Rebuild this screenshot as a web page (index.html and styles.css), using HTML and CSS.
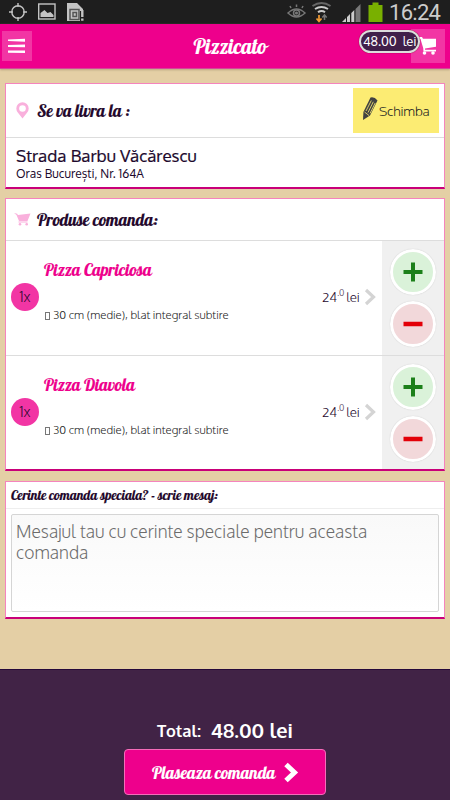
FILE: index.html
```html
<!DOCTYPE html>
<html lang="ro">
<head>
<meta charset="utf-8">
<title>Pizzicato</title>
<link rel="stylesheet" href="styles.css">
</head>
<body>
<div class="status">
  <svg class="s-left" width="90" height="24" viewBox="0 0 90 24" fill="none" stroke="#c4c4c4" stroke-width="1.4">
    <circle cx="18" cy="12" r="6.2"/><path d="M18 3v4M18 17v4M9 12h4M23 12h4"/>
    <rect x="38.7" y="4" width="16.3" height="15"/><path d="M40.5 17v-4l4-3 3 3 3-1 3 3v2z" fill="#c4c4c4" stroke="none"/>
    <path d="M67 3h10l6 6v2h-3v10H67z" fill="#c4c4c4" stroke="none"/><path d="M70 9.5h9v10h-9zM73 12.5h3.5v4H73z" stroke="#555" stroke-width="1.5"/><path d="M82.3 10v7M82.3 18.5v2.3" stroke-width="2.4"/>
  </svg>
  <svg class="s-right" width="98" height="24" viewBox="286 0 98 24">
    <g fill="none" stroke="#777" stroke-width="1.5"><path d="M288 13q8.500-8 17 0-8.500 8-17 0zM291 8l-1-2M296.500 7V4.500M302 8l1-2"/><circle cx="296.500" cy="13" r="3"/></g><circle cx="296.500" cy="13" r="1.600" fill="#777"/>
    <g fill="none" stroke-width="2"><path d="M312.500 6q9-6 18 0" stroke="#666"/><path d="M315 9q6.500-4 13 0M318 12.200q3.700-2.500 7 0" stroke="#ccc"/></g>
    <path d="M319 15v6M316.500 18.500l2.500 3 2.500-3" stroke="#f19a35" stroke-width="1.700" fill="none"/><path d="M324.500 20v-5M322.300 17.500l2.200-2.500 2.200 2.500" stroke="#777" stroke-width="1.500" fill="none"/>
    <path d="M342 22l4-4v4zM347 22v-5l3-3v8zM351.300 22v-9l3-3v12z" fill="#ccc"/><path d="M355.500 22V9l5-5v18z" fill="#777"/>
    <path d="M369 5h4V2.500h6V5h4v17h-14z" transform="translate(-.5)" fill="#79b000"/>
  </svg>
  <span class="clock">16:24</span>
</div>
<header class="bar">
  <div class="menu"><svg width="18" height="16" viewBox="0 0 18 16"><path d="M0 1.500l17-.8v3L0 3zM0 7l17-.4v2.700L0 9zM0 12.400l17 .2v2.500L0 14.800z" fill="#fff"/></svg></div>
  <h1 class="script title">Pizzicato</h1>
  <div class="cart"><svg width="18" height="18" viewBox="0 0 18 18"><path d="M0 0h3l1 1.800h13v8L6 11.500v1.300h11v1.600H4.500L4.200 11 1.500 2H0z" fill="#fff"/><circle cx="5.500" cy="16" r="1.800" fill="#fff"/><circle cx="14" cy="16" r="1.800" fill="#fff"/></svg><span class="amount">48.00&nbsp; lei</span></div>
</header>
<main>
  <section class="card">
    <div class="head address-head">
      <svg class="pin" width="14" height="17" viewBox="0 0 14 17"><path d="M6.500 16.500L2 10.800A6.200 6.200 0 1 1 11 10.800z" fill="#f9b0dc"/><circle cx="6.500" cy="6.500" r="3.300" fill="#fff"/></svg>
      <h2 class="script">Se va livra la :</h2>
      <div class="change"><svg width="18" height="26" viewBox="0 0 18 26"><path d="M9.500 1.500q4-1 7 3L9 19.500l-7 4.500.4-8z" fill="#424242"/><path d="M10.300 4.500L5 15M12.300 5.800L7 16.500M14.200 7L9 17.500M3.500 16l4.500 3.500" stroke="#fcec73" stroke-width=".8"/></svg><span>Schimba</span></div>
    </div>
    <div class="address"><div class="street">Strada Barbu Văcărescu</div><div class="city">Oras București, Nr. 164A</div></div>
  </section>
  <section class="card order">
    <div class="head products-head">
      <svg class="basket" width="17" height="13" viewBox="0 0 17 13"><path d="M0 0l3.200.8.7 1.200L16.500.5 13.500 8H5L2.500 2zM4.500 8.500h9v1h-9z" fill="#f9b0dc"/><circle cx="6" cy="11.300" r="1.300" fill="#f9b0dc"/><circle cx="12.700" cy="11.300" r="1.300" fill="#f9b0dc"/></svg>
      <h2 class="script">Produse comanda:</h2>
    </div>
    <article class="item">
      <div class="qty">1x</div>
      <div class="info"><h3 class="script">Pizza Capriciosa</h3><p><i class="tofu"></i><span>30 cm (medie), blat integral subtire</span></p></div>
      <div class="price">24<sup>.0</sup><span>lei</span></div>
      <svg class="chev" width="12" height="18" viewBox="0 0 12 18"><path d="M2 2l7.500 7L2 16" fill="none" stroke="#d4d4d4" stroke-width="3.200"/></svg>
      <div class="steps"><div class="round plus"><svg width="20" height="20"><path d="M10 .5v19M.5 10h19" stroke="#1c801a" stroke-width="4"/></svg></div><div class="round minus"><svg width="20" height="20"><path d="M.5 10h19" stroke="#e30008" stroke-width="4.500"/></svg></div></div>
    </article>
    <article class="item">
      <div class="qty">1x</div>
      <div class="info"><h3 class="script">Pizza Diavola</h3><p><i class="tofu"></i><span>30 cm (medie), blat integral subtire</span></p></div>
      <div class="price">24<sup>.0</sup><span>lei</span></div>
      <svg class="chev" width="12" height="18" viewBox="0 0 12 18"><path d="M2 2l7.500 7L2 16" fill="none" stroke="#d4d4d4" stroke-width="3.200"/></svg>
      <div class="steps"><div class="round plus"><svg width="20" height="20"><path d="M10 .5v19M.5 10h19" stroke="#1c801a" stroke-width="4"/></svg></div><div class="round minus"><svg width="20" height="20"><path d="M.5 10h19" stroke="#e30008" stroke-width="4.500"/></svg></div></div>
    </article>
  </section>
  <section class="card message">
    <div class="head message-head"><h2 class="script">Cerinte comanda speciala? - scrie mesaj:</h2></div>
    <div class="field">Mesajul tau cu cerinte speciale pentru aceasta<br>comanda</div>
  </section>
</main>
<footer>
  <div class="total"><span class="label">Total:</span><span class="sum">48.00 lei</span></div>
  <div class="submit"><span class="script">Plaseaza comanda</span><svg width="17" height="21" viewBox="0 0 17 21"><path d="M3 2.500l8.500 8L3 18.500" fill="none" stroke="#fff" stroke-width="5"/></svg></div>
</footer>
</body>
</html>
```
FILE: styles.css
```css
* { box-sizing: border-box; }
body { margin: 0; width: 450px; height: 800px; overflow: hidden; display: flex; flex-direction: column; background: #e4cfa5; color: #24082c; font-family: Oxygen, "Open Sans", "Noto Sans", sans-serif; }
h1, h2, h3, p { margin: 0; }
svg { display: block; flex: none; }
.script { font-family: Lobster, "Liberation Serif", serif; font-weight: normal; white-space: nowrap; font-variant-ligatures: none; letter-spacing: -.25px; -webkit-text-stroke: .1px; }
.status { height: 24px; flex: none; background: #1e1e1e; display: flex; }
.s-right { margin-left: 196px; }
.clock { margin-left: 5px; color: #ccc; font: 22px/26px Roboto, sans-serif; letter-spacing: -.7px; }
.bar { height: 45px; flex: none; background: #ee008c; display: flex; align-items: flex-start; justify-content: space-between; padding: 5px 5px 0 2px; border-bottom: 1px solid #d5459a; box-shadow: 0 1px 2px #b9a47e; }
.menu { width: 30px; height: 30px; margin-top: 2px; background: #f235a4; display: flex; align-items: center; justify-content: center; }
.title { font-size: 21px; line-height: 34px; color: #fff; margin-left: 17px; }
.cart { position: relative; width: 34px; height: 34px; background: #f235a4; padding: 8px 8px; }
.amount { position: absolute; left: -52px; top: 1px; width: 61px; height: 23px; border: 2px solid #ddd; border-radius: 12px; background: #41204a; color: #fff; font-size: 13px; line-height: 19px; padding-left: 2px; letter-spacing: -.1px; white-space: pre; box-shadow: 0 0 1px #500; }
main { height: 600px; flex: none; padding: 14px 5px 0; display: flex; flex-direction: column; }
.card { background: #fff; border: 1px solid #f584bd; border-bottom: 2px solid #c90079; height: 106px; margin-bottom: 9px; flex: none; }
.order { height: 273px; margin-bottom: 10px; }
.message { height: 138px; margin: 0; }
.head { display: flex; align-items: center; border-bottom: 1px solid #ddd; }
.head .script { font-size: 17px; line-height: 24px; }
.address-head { height: 54px; padding: 0 5px 0 10px; }
.pin { margin-right: 7px; }
.change { margin-left: auto; width: 86px; height: 45px; background: #fcec73; display: flex; align-items: center; padding-left: 8px; font-weight: 300; font-size: 13.500px; letter-spacing: -.2px; color: #222; }
.change svg { margin-top: -3px; }
.address { padding: 8px 10px 0; color: #20082c; white-space: nowrap; }
.street { font-size: 17px; line-height: 20px; -webkit-text-stroke: .2px; }
.city { font-size: 12px; line-height: 16px; }
.products-head { height: 42px; padding-left: 8px; }
.basket { margin-right: 6px; }
.item { height: 114px; display: flex; align-items: stretch; }
.item + .item { border-top: 1px solid #ddd; height: 115px; }
.qty { width: 28px; height: 28px; margin: 42px 5px 0 5px; border-radius: 50%; background: #f235a4; font-weight: 300; font-size: 14px; line-height: 28px; text-align: center; color: #200828; }
.info { width: 260px; padding-top: 17px; white-space: nowrap; }
.info .script { font-size: 17px; line-height: 24px; color: #ee008c; }
.info p { margin-top: 25px; font-weight: 300; font-size: 11.500px; line-height: 16px; color: #222; display: flex; align-items: center; }
.tofu { width: 5px; height: 8px; border: 1px solid #777; margin: 1px 3px 0 1px; }
.price { width: 56px; padding: 46px 0 0 18px; font-size: 13.500px; font-weight: 300; line-height: 19px; letter-spacing: -.2px; white-space: nowrap; display: flex; }
.price sup { font-size: 9px; line-height: 12px; margin: 0 2px 0 0; color: #5a4660; }
.chev { margin: 47px 5px 0 4px; }
.steps { margin-left: auto; width: 62px; background: #f0f0f0; padding: 8px 0 0 8px; }
.item + .item .steps { height: 113px; }
.round { width: 46px; height: 46px; border-radius: 50%; border: 3px solid #fff; box-shadow: 0 0 1px #bbb; display: flex; align-items: center; justify-content: center; }
.plus { background: #daf2d9; }
.minus { background: #f2d8da; margin-top: 6px; }
.message-head { height: 27px; padding-left: 5px; border-color: #eee; }
.message-head .script { font-size: 13.500px; letter-spacing: -.13px; }
.field { margin: 5px; height: 98px; border: 1px solid #d5d5d5; border-radius: 2px; background: linear-gradient(#f9f9f9, #fff); padding: 6px 4px; font-weight: 300; font-size: 17.550px; line-height: 21px; color: #6c6c6c; white-space: nowrap; }
footer { height: 131px; flex: none; background: #412346; border-top: 1px solid #25093a; color: #fff; display: flex; flex-direction: column; align-items: center; padding-top: 45px; }
.total { height: 34px; display: flex; align-items: center; gap: 10px; font-weight: 600; white-space: nowrap; padding-bottom: 4px; }
.label { font-size: 16.500px; }
.sum { font-size: 20px; }
.submit { width: 202px; height: 46px; background: #ee008c; border: 1px solid #f56cb9; border-radius: 4px; display: flex; align-items: center; padding-left: 27px; gap: 8px; }
.submit .script { font-size: 17px; }
```
